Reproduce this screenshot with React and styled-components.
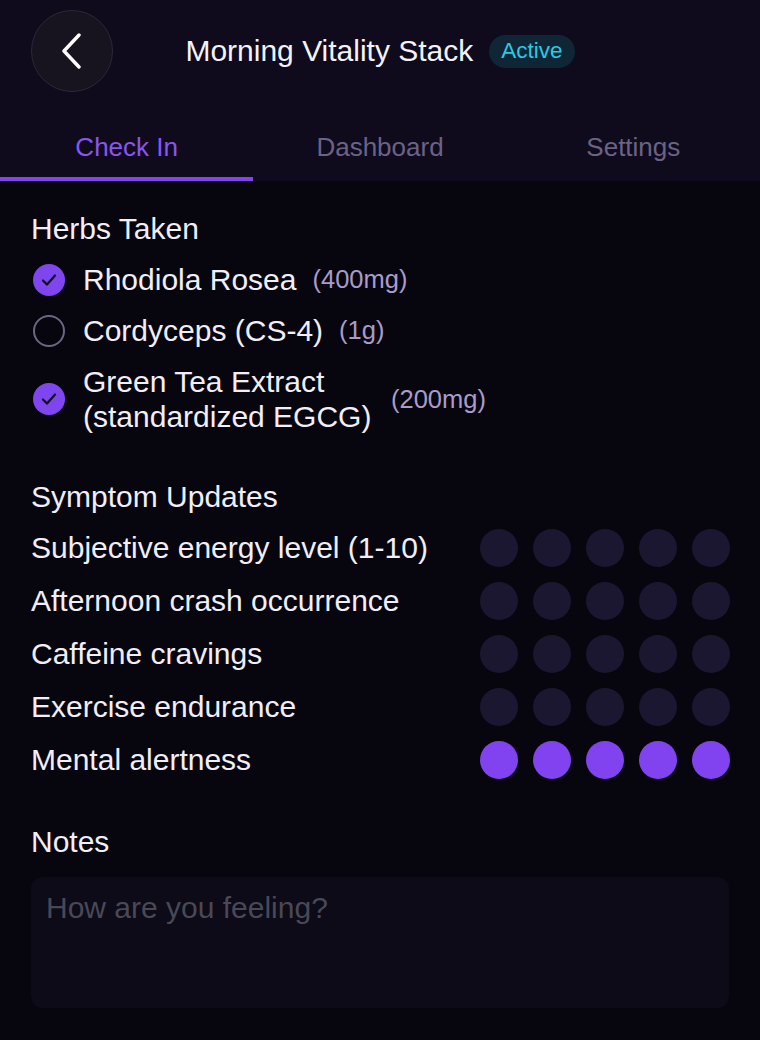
import React from "react"
import styled, { createGlobalStyle } from "styled-components"

const GlobalStyle = createGlobalStyle`
  html, body {
    margin: 0;
    padding: 0;
    background: #07060e;
    font-family: "Liberation Sans", Arial, sans-serif;
    color: #f1eef8;
  }
`

const Page = styled.div`
  width: 760px;
  min-height: 1040px;
  background: #07060e;
`

const Header = styled.header`
  background: #0f0b1c;
  padding-top: 10px;
`

const TopBar = styled.div`
  display: grid;
  grid-template-columns: 82px 1fr 82px;
  align-items: center;
  padding: 0 31px;
  height: 82px;
`

const BackButton = styled.button`
  width: 82px;
  height: 82px;
  border-radius: 50%;
  background: #17141f;
  border: 1px solid #2c2838;
  display: flex;
  align-items: center;
  justify-content: center;
  padding: 0;
  cursor: pointer;
`

const TitleWrap = styled.div`
  display: flex;
  align-items: center;
  justify-content: center;
  gap: 16px;
`

const Title = styled.h1`
  margin: 0;
  font-size: 30px;
  font-weight: 400;
  color: #f4f2fa;
`

const Badge = styled.span`
  display: inline-flex;
  align-items: center;
  height: 33px;
  padding: 0 12px;
  border-radius: 17px;
  background: #0f2636;
  color: #2cc9e3;
  font-size: 22.5px;
`

const Tabs = styled.nav`
  display: grid;
  grid-template-columns: repeat(3, 1fr);
  margin-top: 10px;
`

const Tab = styled.div`
  text-align: center;
  font-size: 26px;
  line-height: 30px;
  padding: 30px 0 15px;
  color: ${(p) => (p.$active ? "#8a55f0" : "#6b6385")};
  border-bottom: 4px solid ${(p) => (p.$active ? "#8046ec" : "transparent")};
`

const Content = styled.main`
  padding: 32px 31px 0;
`

const SectionTitle = styled.h2`
  margin: ${(p) => p.$top || 0}px 0 0;
  font-size: 30px;
  font-weight: 400;
  line-height: 32px;
  color: #f1eef8;
`

const HerbList = styled.div`
  display: flex;
  flex-direction: column;
  gap: 4px;
  margin-top: 11px;
`

const HerbRow = styled.label`
  display: flex;
  align-items: center;
  padding: 6px 0;
`

const Check = styled.span`
  flex: none;
  width: 32px;
  height: 32px;
  margin-left: 2px;
  border-radius: 50%;
  box-sizing: border-box;
  display: flex;
  align-items: center;
  justify-content: center;
  background: ${(p) => (p.$checked ? "#7f45ee" : "transparent")};
  border: ${(p) => (p.$checked ? "none" : "2px solid #6d6584")};
`

const HerbName = styled.span`
  margin-left: 18px;
  font-size: 30px;
  line-height: 35px;
  max-width: 292px;
  color: #f1eef8;
`

const Dose = styled.span`
  margin-left: 16px;
  font-size: 25.5px;
  color: #a99bcb;
`

const SymptomList = styled.div`
  display: flex;
  flex-direction: column;
  gap: 15px;
  margin-top: 16px;
`

const SymptomRow = styled.div`
  display: flex;
  align-items: center;
  justify-content: space-between;
`

const SymptomLabel = styled.span`
  font-size: 30px;
  color: #f1eef8;
`

const Dots = styled.div`
  display: flex;
  gap: 15px;
  margin-right: -1px;
`

const Dot = styled.span`
  width: 38px;
  height: 38px;
  border-radius: 50%;
  background: ${(p) => (p.$on ? "#8043ef" : "#1b1730")};
`

const NotesBox = styled.textarea`
  display: block;
  box-sizing: border-box;
  width: 100%;
  height: 131px;
  margin-top: 19px;
  padding: 15px;
  border: none;
  border-radius: 12px;
  background: #0c0b17;
  resize: none;
  font-family: "Liberation Sans", Arial, sans-serif;
  font-size: 30px;
  line-height: 32px;
  color: #f1eef8;
  outline: none;

  &::placeholder {
    color: #4a4857;
  }
`

const herbs = [
  { name: "Rhodiola Rosea", dose: "(400mg)", checked: true },
  { name: "Cordyceps (CS-4)", dose: "(1g)", checked: false },
  { name: "Green Tea Extract (standardized EGCG)", dose: "(200mg)", checked: true },
]

const symptoms = [
  { label: "Subjective energy level (1-10)", value: 0 },
  { label: "Afternoon crash occurrence", value: 0 },
  { label: "Caffeine cravings", value: 0 },
  { label: "Exercise endurance", value: 0 },
  { label: "Mental alertness", value: 5 },
]

function Chevron() {
  return (
    <svg width="24" height="36" viewBox="0 0 24 36" fill="none">
      <path
        d="M19 2 L4 18 L19 34"
        stroke="#ffffff"
        strokeWidth="3.4"
        strokeLinecap="round"
        strokeLinejoin="round"
      />
    </svg>
  )
}

function Tick() {
  return (
    <svg width="16" height="14" viewBox="0 0 16 14" fill="none">
      <path
        d="M2 7.5 L6 11.5 L14 2.5"
        stroke="#0c0915"
        strokeWidth="2.2"
        strokeLinecap="round"
        strokeLinejoin="round"
      />
    </svg>
  )
}

export default function App() {
  return (
    <>
      <GlobalStyle />
      <Page>
        <Header>
          <TopBar>
            <BackButton aria-label="Back">
              <Chevron />
            </BackButton>
            <TitleWrap>
              <Title>Morning Vitality Stack</Title>
              <Badge>Active</Badge>
            </TitleWrap>
          </TopBar>
          <Tabs>
            <Tab $active>Check In</Tab>
            <Tab>Dashboard</Tab>
            <Tab>Settings</Tab>
          </Tabs>
        </Header>

        <Content>
          <SectionTitle>Herbs Taken</SectionTitle>
          <HerbList>
            {herbs.map((h) => (
              <HerbRow key={h.name}>
                <Check $checked={h.checked}>{h.checked && <Tick />}</Check>
                <HerbName>{h.name}</HerbName>
                <Dose>{h.dose}</Dose>
              </HerbRow>
            ))}
          </HerbList>

          <SectionTitle $top={41}>Symptom Updates</SectionTitle>
          <SymptomList>
            {symptoms.map((s) => (
              <SymptomRow key={s.label}>
                <SymptomLabel>{s.label}</SymptomLabel>
                <Dots>
                  {[1, 2, 3, 4, 5].map((n) => (
                    <Dot key={n} $on={n <= s.value} />
                  ))}
                </Dots>
              </SymptomRow>
            ))}
          </SymptomList>

          <SectionTitle $top={47}>Notes</SectionTitle>
          <NotesBox placeholder="How are you feeling?" />
        </Content>
      </Page>
    </>
  )
}
